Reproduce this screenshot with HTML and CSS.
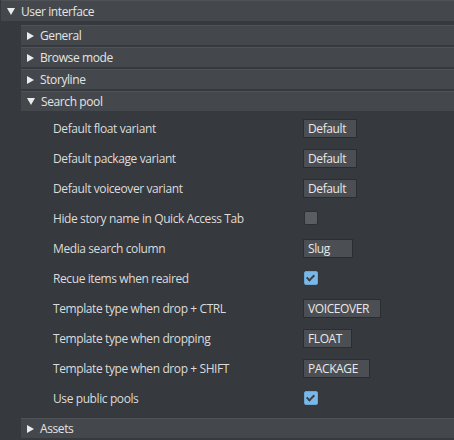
FILE: index.html
```html
<!DOCTYPE html>
<html lang="en">
<head>
  <meta charset="UTF-8">
  <title>Settings</title>
  <link rel="stylesheet" href="styles.css">
</head>
<body>

  <div class="section">
    <div class="hdr top open"><span class="arrow"></span>User interface</div>

    <div class="children">
      <div class="hdr"><span class="arrow"></span>General</div>
      <div class="hdr"><span class="arrow"></span>Browse mode</div>
      <div class="hdr"><span class="arrow"></span>Storyline</div>
      <div class="hdr open"><span class="arrow"></span>Search pool</div>

      <div class="props">
        <div class="row"><span class="label">Default float variant</span><span class="field w-default">Default</span></div>
        <div class="row"><span class="label">Default package variant</span><span class="field w-default">Default</span></div>
        <div class="row"><span class="label">Default voiceover variant</span><span class="field w-default">Default</span></div>
        <div class="row"><span class="label">Hide story name in Quick Access Tab</span><span class="check"></span></div>
        <div class="row"><span class="label">Media search column</span><span class="field w-slug">Slug</span></div>
        <div class="row"><span class="label">Recue items when reaired</span><span class="check on"></span></div>
        <div class="row"><span class="label">Template type when drop + CTRL</span><span class="field w-voice">VOICEOVER</span></div>
        <div class="row"><span class="label">Template type when dropping</span><span class="field w-float">FLOAT</span></div>
        <div class="row"><span class="label">Template type when drop + SHIFT</span><span class="field w-package">PACKAGE</span></div>
        <div class="row"><span class="label">Use public pools</span><span class="check on"></span></div>
      </div>

      <div class="hdr"><span class="arrow"></span>Assets</div>
    </div>
  </div>

</body>
</html>
```

FILE: styles.css
```css
body {
  margin: 0;
  background: #36393d;
  color: #dcdcdc;
  font-family: "Open Sans", sans-serif;
  font-size: 12px;
  letter-spacing: -0.4px;
  overflow: hidden;
}
.hdr {
  display: flex;
  align-items: center;
  height: 19px;
  border-top: 1px solid #4f5357;
  background: #44484c;
  color: #e4e4e4;
  margin-bottom: 2px;
}
.hdr.top {
  height: 20px;
  margin-left: 1px;
  margin-bottom: 4px;
}
.hdr .arrow {
  width: 0;
  height: 0;
  margin: 0 6px 0 6px;
  border-top: 4px solid transparent;
  border-bottom: 4px solid transparent;
  border-left: 7px solid #ececec;
}
.hdr.open .arrow {
  border-left: 4px solid transparent;
  border-right: 4px solid transparent;
  border-top: 7px solid #ececec;
  border-bottom: 0;
  margin: 0 6px 0 6px;
}
.children {
  padding-left: 21px;
}
.props {
  padding: 0 0 5px 32px;
}
.row {
  display: grid;
  grid-template-columns: 250px auto;
  align-items: center;
  height: 30px;
}
.field {
  box-sizing: border-box;
  height: 19px;
  line-height: 17px;
  padding: 0 4px;
  background: #4b4f53;
  border: 1px solid #2b2e31;
  color: #e8e8e8;
  white-space: nowrap;
}
.w-default { width: 54px; }
.w-slug { width: 50px; }
.w-voice { width: 78px; }
.w-float { width: 49px; }
.w-package { width: 67px; }
.check {
  box-sizing: border-box;
  width: 14px;
  height: 14px;
  margin-left: 1px;
  border-radius: 2px;
  background: #5a5e62;
  border: 1px solid #2e3134;
  position: relative;
}
.check.on {
  background: #7ab8ea;
  border-color: #6aa6d6;
}
/* tick mark */
.check.on::after {
  content: "";
  position: absolute;
  left: 3px;
  top: 1px;
  width: 3px;
  height: 6px;
  border-right: 2px solid #3b4046;
  border-bottom: 2px solid #3b4046;
  transform: rotate(45deg);
}
```
